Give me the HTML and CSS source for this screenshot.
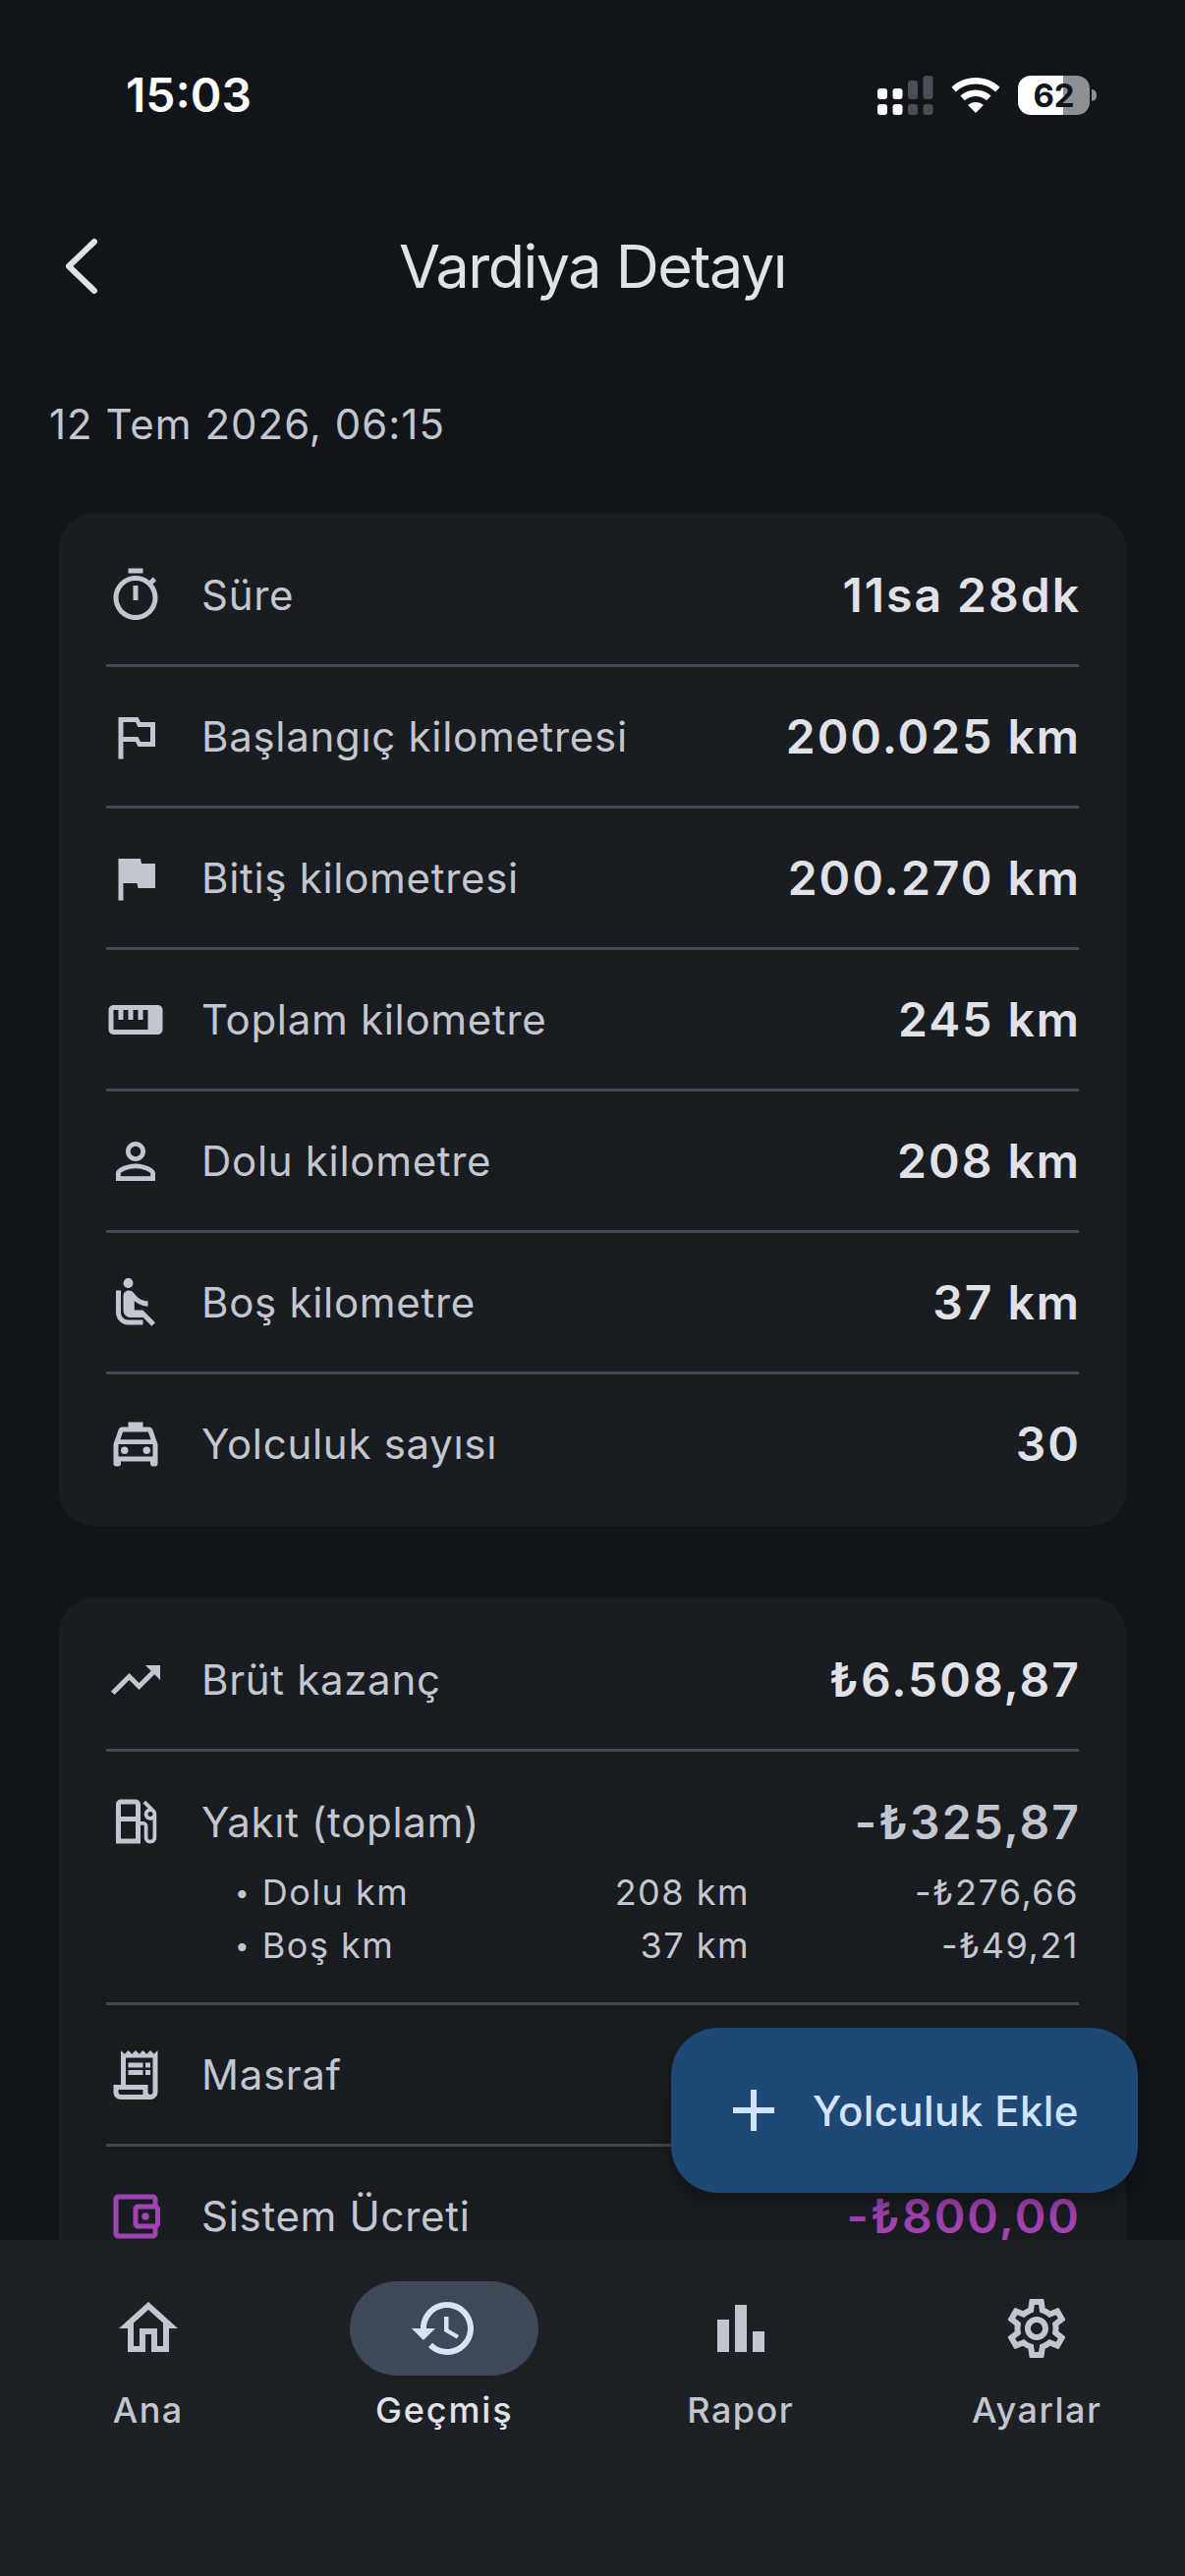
FILE: index.html
```html
<!DOCTYPE html>
<html lang="tr">
<head>
<meta charset="utf-8">
<title>Vardiya Detayı</title>
<link rel="stylesheet" href="styles.css">
</head>
<body>
<div class="screen">
  <div class="content">
    <header class="status">
      <span class="clock">15:03</span>
      <div class="status-icons">
        <svg class="signal" width="57" height="40" viewBox="0 0 57 40">
          <g fill="#fff"><rect x="0" y="13" width="10" height="11" rx="3"/><rect x="15.500" y="13" width="10" height="11" rx="3"/><rect x="0" y="29" width="10" height="11" rx="3"/><rect x="15.500" y="29" width="10" height="11" rx="3"/></g>
          <g fill="#4c4e55"><rect x="31" y="5" width="10" height="19" rx="3"/><rect x="46.500" y="0" width="10" height="24" rx="3"/><rect x="31" y="29" width="10" height="11" rx="3"/><rect x="46.500" y="29" width="10" height="11" rx="3"/></g>
        </svg>
        <svg class="wifi" width="50" height="36" viewBox="0 0 50 36">
          <path fill="#fff" d="M25 0C15.500 0 7 3.600 .5 9.700l4.300 4.700C10.200 9.500 17.200 6.500 25 6.500s14.800 3 20.200 7.900l4.300-4.700C43 3.600 34.500 0 25 0zm0 12.500c-6 0-11.400 2.300-15.600 6l4.400 4.800c3-2.600 6.900-4.200 11.200-4.200s8.200 1.600 11.200 4.200l4.400-4.800c-4.200-3.700-9.600-6-15.600-6zm0 12.500c-3 0-5.700 1.100-7.900 2.900L25 36l7.900-8.100C30.700 26.100 28 25 25 25z"/>
        </svg>
        <div class="battery"><span class="battery-level">62</span><span class="battery-nub"></span></div>
      </div>
    </header>

    <div class="appbar">
      <svg class="back" width="36" height="60" viewBox="0 0 36 60"><path d="M31 5 5 30l26 25" fill="none" stroke="#e1e2e8" stroke-width="6" stroke-linecap="round" stroke-linejoin="round"/></svg>
      <h1 class="title">Vardiya Detayı</h1>
    </div>

    <p class="date">12 Tem 2026, 06:15</p>

    <section class="card">
      <div class="row">
        <svg class="icon" viewBox="0 0 24 24"><path d="M15 1H9v2h6V1zm-4 13h2V8h-2v6zm8.030-6.610l1.420-1.420c-.43-.51-.9-.99-1.410-1.410l-1.420 1.420C16.070 4.740 14.120 4 12 4c-4.970 0-9 4.030-9 9s4.020 9 9 9 9-4.030 9-9c0-2.120-.74-4.070-1.970-5.610zM12 20c-3.870 0-7-3.130-7-7s3.130-7 7-7 7 3.130 7 7-3.130 7-7 7z"/></svg>
        <span class="label">Süre</span><span class="value">11sa 28dk</span>
      </div>
      <div class="row">
        <svg class="icon" viewBox="0 0 24 24"><path d="M14 6l-1-2H5v17h2v-7h5l1 2h7V6h-6zm4 8h-4l-1-2H7V6h5l1 2h5v6z"/></svg>
        <span class="label">Başlangıç kilometresi</span><span class="value">200.025 km</span>
      </div>
      <div class="row">
        <svg class="icon" viewBox="0 0 24 24"><path d="M14.400 6L14 4H5v17h2v-7h5.600l.4 2h7V6z"/></svg>
        <span class="label">Bitiş kilometresi</span><span class="value">200.270 km</span>
      </div>
      <div class="row">
        <svg class="icon" viewBox="0 0 24 24"><path d="M21 6H3c-1.100 0-2 .9-2 2v8c0 1.100.9 2 2 2h18c1.100 0 2-.9 2-2V8c0-1.100-.9-2-2-2zm0 10H3V8h2v4h2V8h2v4h2V8h2v4h2V8h2v8z"/></svg>
        <span class="label">Toplam kilometre</span><span class="value">245 km</span>
      </div>
      <div class="row">
        <svg class="icon" viewBox="0 0 24 24"><path d="M12 5.900c1.160 0 2.100.94 2.100 2.100s-.94 2.100-2.100 2.100S9.900 9.160 9.900 8s.94-2.100 2.100-2.100m0 9c2.970 0 6.100 1.460 6.100 2.100v1.100H5.900V17c0-.64 3.130-2.100 6.100-2.100M12 4C9.790 4 8 5.790 8 8s1.790 4 4 4 4-1.790 4-4-1.790-4-4-4zm0 9c-2.670 0-8 1.340-8 4v3h16v-3c0-2.660-5.330-4-8-4z"/></svg>
        <span class="label">Dolu kilometre</span><span class="value">208 km</span>
      </div>
      <div class="row">
        <svg class="icon" viewBox="0 0 24 24"><path d="M7.590 5.410c-.78-.78-.78-2.050 0-2.830.78-.78 2.050-.78 2.830 0 .78.78.78 2.050 0 2.830-.79.79-2.050.79-2.830 0zM6 16V7H4v9c0 2.760 2.240 5 5 5h6v-2H9c-1.660 0-3-1.340-3-3zm14 4.070L14.930 15H11.500v-3.680c1.400 1.150 3.600 2.160 5.500 2.160v-2.160c-1.660.02-3.610-.87-4.670-2.040l-1.400-1.550c-.19-.21-.43-.38-.69-.5-.29-.14-.62-.23-.96-.23h-.03C8.010 7 7 8.010 7 9.250V15c0 1.660 1.340 3 3 3h5.070l3.500 3.500L20 20.070z"/></svg>
        <span class="label">Boş kilometre</span><span class="value">37 km</span>
      </div>
      <div class="row">
        <svg class="icon" viewBox="0 0 24 24"><path d="M18.920 6.010C18.720 5.420 18.160 5 17.500 5H15V3H9v2H6.500c-.66 0-1.210.42-1.420 1.010L3 12v8c0 .55.45 1 1 1h1c.55 0 1-.45 1-1v-1h12v1c0 .55.45 1 1 1h1c.55 0 1-.45 1-1v-8l-2.080-5.990zM6.850 7h10.290l1.080 3.110H5.770L6.850 7zM19 17H5v-5h14v5z"/><circle cx="7.500" cy="14.500" r="1.500"/><circle cx="16.500" cy="14.500" r="1.500"/></svg>
        <span class="label">Yolculuk sayısı</span><span class="value">30</span>
      </div>
    </section>

    <section class="card">
      <div class="row">
        <svg class="icon" viewBox="0 0 24 24"><path d="M16 6l2.290 2.290-4.880 4.880-4-4L2 16.590 3.410 18l6-6 4 4 6.300-6.290L22 12V6z"/></svg>
        <span class="label">Brüt kazanç</span><span class="value">₺6.508,87</span>
      </div>
      <div class="fuel">
        <div class="fuel-head">
          <svg class="icon" viewBox="0 0 24 24"><path d="M19.770 7.230l.01-.01-3.720-3.720L15 4.560l2.110 2.110c-.94.36-1.610 1.260-1.610 2.330 0 1.380 1.120 2.500 2.500 2.500.36 0 .69-.08 1-.21v7.210c0 .55-.45 1-1 1s-1-.45-1-1V14c0-1.100-.9-2-2-2h-1V5c0-1.100-.9-2-2-2H6c-1.100 0-2 .9-2 2v16h10v-7.500h1.500v5c0 1.380 1.120 2.500 2.500 2.500s2.500-1.120 2.500-2.500V9c0-.69-.28-1.320-.73-1.770zM12 13.500V19H6v-7h6v1.500zm0-3.500H6V5h6v5zm6 0c-.55 0-1-.45-1-1s.45-1 1-1 1 .45 1 1-.45 1-1 1z"/></svg>
          <span class="label">Yakıt (toplam)</span><span class="value value-muted">-₺325,87</span>
        </div>
        <div class="sub"><span><span class="bullet">•</span> Dolu km</span><span class="sub-km">208 km</span><span class="sub-val">-₺276,66</span></div>
        <div class="sub"><span><span class="bullet">•</span> Boş km</span><span class="sub-km">37 km</span><span class="sub-val">-₺49,21</span></div>
      </div>
      <div class="row">
        <svg class="icon" viewBox="0 0 24 24"><path d="M19.500 3.500L18 2l-1.500 1.500L15 2l-1.500 1.500L12 2l-1.500 1.500L9 2 7.500 3.500 6 2v14H3v3c0 1.660 1.340 3 3 3h12c1.660 0 3-1.340 3-3V2l-1.500 1.500zM15 20H6c-.55 0-1-.45-1-1v-1h10v2zm4-1c0 .55-.45 1-1 1s-1-.45-1-1v-3H8V5h11v14z"/><path d="M9 7h6v2H9zm7 0h2v2h-2zM9 10h6v2H9zm7 0h2v2h-2z"/></svg>
        <span class="label">Masraf</span>
      </div>
      <div class="row">
        <svg class="icon icon-purple" viewBox="0 0 24 24"><path d="M21 7.280V5c0-1.100-.9-2-2-2H5c-1.110 0-2 .9-2 2v14c0 1.100.89 2 2 2h14c1.100 0 2-.9 2-2v-2.280c.59-.35 1-.98 1-1.720V9c0-.74-.41-1.380-1-1.720zM20 9v6h-7V9h7zM5 19V5h14v2h-6c-1.100 0-2 .9-2 2v6c0 1.100.9 2 2 2h6v2H5z"/><circle cx="16" cy="12" r="1.500"/></svg>
        <span class="label">Sistem Ücreti</span><span class="value value-purple">-₺800,00</span>
      </div>
    </section>
  </div>

  <button class="fab">
    <svg class="fab-icon" viewBox="0 0 24 24"><path d="M19 13h-6v6h-2v-6H5v-2h6V5h2v6h6v2z"/></svg>
    <span>Yolculuk Ekle</span>
  </button>

  <nav class="nav">
    <div class="nav-item">
      <span class="nav-pill"><svg class="nav-icon" viewBox="0 0 24 24"><path d="M12 5.690l5 4.500V18h-2v-6H9v6H7v-7.810l5-4.500M12 3L2 12h3v8h6v-6h2v6h6v-8h3L12 3z"/></svg></span>
      <span class="nav-label">Ana</span>
    </div>
    <div class="nav-item nav-active">
      <span class="nav-pill"><svg class="nav-icon" viewBox="0 0 24 24"><path d="M13 3c-4.970 0-9 4.030-9 9H1l3.890 3.890.07.14L9 12H6c0-3.870 3.130-7 7-7s7 3.130 7 7-3.130 7-7 7c-1.930 0-3.680-.79-4.940-2.060l-1.420 1.420C8.270 19.990 10.510 21 13 21c4.970 0 9-4.030 9-9s-4.030-9-9-9zm-1 5v5l4.280 2.540.72-1.210-3.500-2.080V8H12z"/></svg></span>
      <span class="nav-label">Geçmiş</span>
    </div>
    <div class="nav-item">
      <span class="nav-pill"><svg class="nav-icon" viewBox="0 0 24 24"><path d="M4 9h4v11H4zm12 4h4v7h-4zm-6-9h4v16h-4z"/></svg></span>
      <span class="nav-label">Rapor</span>
    </div>
    <div class="nav-item">
      <span class="nav-pill"><svg class="nav-icon" viewBox="0 0 24 24"><path d="M19.430 12.980c.04-.32.07-.64.07-.98 0-.34-.03-.66-.07-.98l2.110-1.650c.19-.15.24-.42.12-.64l-2-3.460c-.09-.16-.26-.25-.44-.25-.06 0-.12.01-.17.03l-2.490 1c-.52-.4-1.080-.73-1.690-.98l-.38-2.650C14.460 2.180 14.250 2 14 2h-4c-.25 0-.46.18-.49.42l-.38 2.650c-.61.25-1.170.59-1.690.98l-2.490-1c-.06-.02-.12-.03-.18-.03-.17 0-.34.09-.43.25l-2 3.460c-.13.22-.07.49.12.64l2.110 1.650c-.04.32-.07.65-.07.98 0 .33.03.66.07.98l-2.110 1.650c-.19.15-.24.42-.12.64l2 3.460c.09.16.26.25.44.25.06 0 .12-.01.17-.03l2.490-1c.52.4 1.080.73 1.690.98l.38 2.650c.03.24.24.42.49.42h4c.25 0 .46-.18.49-.42l.38-2.650c.61-.25 1.170-.59 1.690-.98l2.490 1c.06.02.12.03.18.03.17 0 .34-.09.43-.25l2-3.460c.12-.22.07-.49-.12-.64l-2.110-1.650zm-1.980-1.710c.04.31.05.52.05.73 0 .21-.02.43-.05.73l-.14 1.130.89.7 1.080.84-.7 1.210-1.270-.51-1.040-.42-.9.68c-.43.32-.84.56-1.250.73l-1.060.43-.16 1.130-.2 1.350h-1.400l-.19-1.350-.16-1.130-1.060-.43c-.43-.18-.83-.41-1.230-.71l-.91-.7-1.060.43-1.270.51-.7-1.210 1.080-.84.89-.7-.14-1.130c-.03-.31-.05-.54-.05-.74s.02-.43.05-.73l.14-1.130-.89-.7-1.080-.84.7-1.210 1.270.51 1.040.42.9-.68c.43-.32.84-.56 1.250-.73l1.060-.43.16-1.130.2-1.350h1.390l.19 1.350.16 1.130 1.060.43c.43.18.83.41 1.230.71l.91.7 1.060-.43 1.270-.51.7 1.210-1.070.85-.89.7.14 1.130zM12 8c-2.210 0-4 1.790-4 4s1.790 4 4 4 4-1.790 4-4-1.790-4-4-4zm0 6c-1.100 0-2-.9-2-2s.9-2 2-2 2 .9 2 2-.9 2-2 2z"/></svg></span>
      <span class="nav-label">Ayarlar</span>
    </div>
  </nav>
</div>
</body>
</html>
```

FILE: styles.css
```css
* { box-sizing: border-box; }
html, body { margin: 0; padding: 0; background: #111418; }
body { font-family: "Inter", "Noto Sans", sans-serif; color: #e1e2e8; }

.screen {
  position: relative;
  width: 1206px;
  height: 2622px;
  overflow: hidden;
  display: flex;
  flex-direction: column;
  background: #111418;
}
.content { flex: 1; min-height: 0; overflow: hidden; }

/* status bar */
.status {
  height: 117px;
  padding: 76px 97px 0 128px;
  display: flex;
  justify-content: space-between;
  align-items: center;
}
.clock { font-size: 48px; font-weight: 600; color: #fff; line-height: 44px; }
.status-icons { display: flex; align-items: center; gap: 18px; }
.signal, .wifi { display: block; }
.battery { position: relative; width: 73px; height: 40px; }
.battery-level {
  display: block;
  width: 100%;
  height: 100%;
  border-radius: 13px;
  background: linear-gradient(90deg, #fff 0 63%, #8e8f95 63% 100%);
  color: #11141a;
  font-size: 33px;
  font-weight: 700;
  line-height: 40px;
  text-align: center;
}
.battery-nub {
  position: absolute;
  left: 75px;
  top: 14px;
  width: 5px;
  height: 12px;
  border-radius: 0 6px 6px 0;
  background: #8e8f95;
}

/* app bar */
.appbar {
  position: relative;
  height: 108px;
  margin-top: 100px;
  display: flex;
  align-items: center;
  justify-content: center;
}
.back { position: absolute; left: 65px; top: 24px; }
.title { margin: 0; font-size: 61px; font-weight: 400; letter-spacing: -1.500px; color: #e1e2e8; }

.date {
  margin: 0;
  padding: 81px 50px 0;
  height: 197px;
  font-size: 42px;
  line-height: 52px;
  letter-spacing: 1px;
  color: #c3c6cf;
}

/* cards */
.card {
  margin: 0 60px 73px;
  padding: 13px 48px;
  background: #191c20;
  border-radius: 36px;
}
.row, .fuel-head { display: flex; align-items: center; }
.row { height: 141px; }
.row + .row, .row + .fuel, .fuel + .row { border-top: 3px solid #43474e; box-sizing: content-box; }
.fuel { padding: 46px 0 31px; }
.fuel-head { height: 50px; margin-bottom: 20px; }

.icon { width: 60px; height: 60px; fill: #c3c6cf; flex: none; margin-right: 37px; }
.icon-purple { fill: #a243b3; }
.label { flex: 1; font-size: 42px; letter-spacing: .700px; color: #c3c6cf; }
.value {
  margin-right: -2px;
  font-size: 48px;
  font-weight: 600;
  letter-spacing: 2px;
  color: #e1e2e8;
}
.value-muted { color: #c3c6cf; }
.value-purple { color: #a243b3; }

.sub {
  display: grid;
  grid-template-columns: 1fr 200px 335px;
  height: 54px;
  align-items: center;
  padding-left: 131px;
  font-size: 36px;
  letter-spacing: 1.500px;
  color: #c3c6cf;
}
.bullet { font-size: 26px; vertical-align: 3px; }
.sub-km, .sub-val { text-align: right; }

/* fab */
.fab {
  position: absolute;
  left: 683px;
  top: 2064px;
  width: 475px;
  height: 168px;
  padding: 0 0 0 48px;
  border: 0;
  border-radius: 48px;
  background: #1e4976;
  color: #d1e4ff;
  font-family: inherit;
  font-size: 42px;
  font-weight: 500;
  letter-spacing: .400px;
  display: flex;
  align-items: center;
  gap: 24px;
  box-shadow: 0 12px 24px rgba(0, 0, 0, .3);
}
.fab-icon { width: 72px; height: 72px; fill: #d1e4ff; }

/* nav */
.nav {
  flex: none;
  height: 342px;
  padding-top: 42px;
  background: #1d2024;
  display: grid;
  grid-template-columns: repeat(4, 1fr);
  align-items: start;
}
.nav-item { display: flex; flex-direction: column; align-items: center; }
.nav-pill {
  width: 192px;
  height: 96px;
  border-radius: 48px;
  display: flex;
  align-items: center;
  justify-content: center;
}
.nav-icon { width: 72px; height: 72px; fill: #c3c6cf; }
.nav-label { margin-top: 10px; font-size: 36px; line-height: 50px; font-weight: 500; letter-spacing: 1.500px; color: #c3c6cf; }
.nav-active .nav-pill { background: #3e4858; }
.nav-active .nav-icon { fill: #d7e3f7; }
.nav-active .nav-label { font-weight: 500; letter-spacing: 1.900px; color: #e1e2e8; }
```
